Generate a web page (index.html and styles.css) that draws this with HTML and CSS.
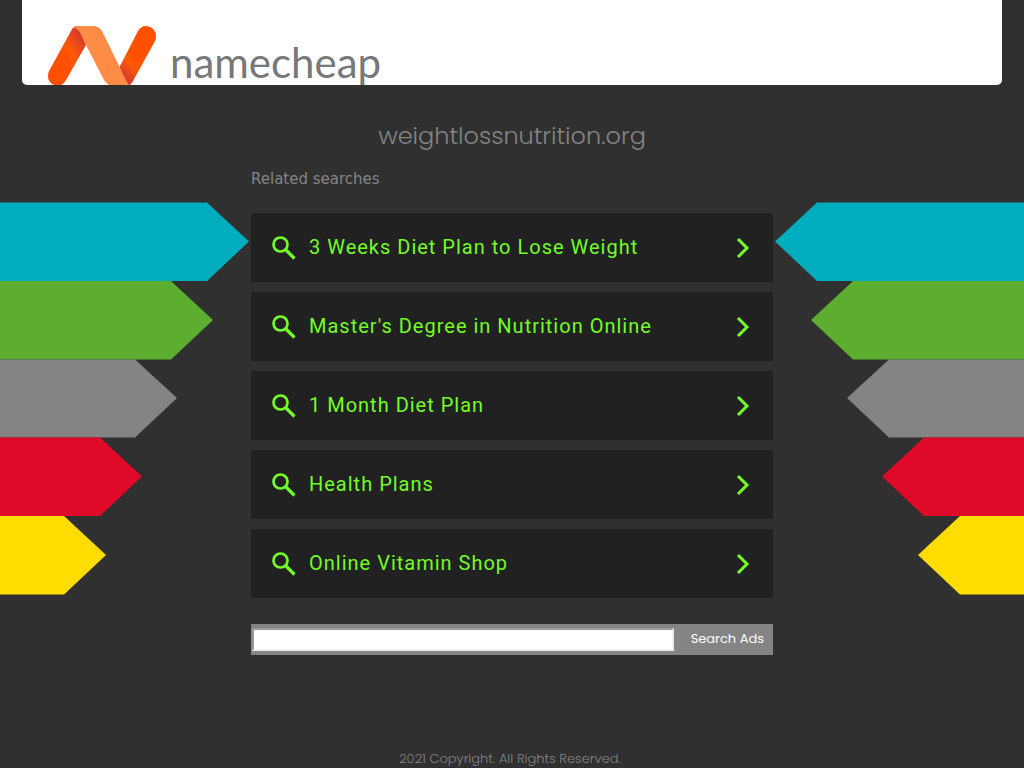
FILE: index.html
```html
<!DOCTYPE html>
<html lang="en">
<head>
<meta charset="utf-8">
<meta name="viewport" content="width=device-width, initial-scale=1">
<title>weightlossnutrition.org</title>
<link rel="stylesheet" href="styles.css">
</head>
<body>
<svg class="defs" aria-hidden="true">
  <symbol id="search" viewBox="0 0 24 24"><circle cx="8.500" cy="8.500" r="7" fill="none" stroke="currentColor" stroke-width="2.700"/><path d="M13.500 13.500L22.500 22.500" fill="none" stroke="currentColor" stroke-width="3.200"/></symbol>
  <symbol id="chevron" viewBox="0 0 14 22"><path d="M2 2L11 11L2 20" fill="none" stroke="currentColor" stroke-width="3"/></symbol>
  <symbol id="arrows" viewBox="0 0 250 393">
    <path fill="#00adbf" d="M0 0.500H207L249 39.500L207 79H0z"/>
    <path fill="#5dad2f" d="M0 79H171L213 118L171 157.500H0z"/>
    <path fill="#848484" d="M0 157.500H135L177 196L135 235.500H0z"/>
    <path fill="#de0a28" d="M0 235.500H100L142 274.500L100 314H0z"/>
    <path fill="#ffdd00" d="M0 314H64L106 353L64 392.500H0z"/>
  </symbol>
</svg>
<header class="header">
  <a class="brand" href="#">
    <svg class="mark" viewBox="0 0 108 60" aria-hidden="true">
      <defs>
        <linearGradient id="left" x1="0.8" y1="0.1" x2="0.45" y2="0.5"><stop offset="0" stop-color="#d53a2c"/><stop offset="0.7" stop-color="#ff5a08"/><stop offset="1" stop-color="#ff5000"/></linearGradient>
        <linearGradient id="right" x1="0.2" y1="0.95" x2="0.45" y2="0.55"><stop offset="0" stop-color="#cf3534"/><stop offset="0.7" stop-color="#ff5a08"/><stop offset="1" stop-color="#ff5000"/></linearGradient>
      </defs>
      <path fill="url(#left)" d="M1 45L23 5Q25 0 30 0L38 19L18 54Q15 60 9 60Q0 58 0 50Q0 47 1 45z"/>
      <path fill="url(#right)" d="M71 42L90 5Q93 0 98 0Q108 1 108 11Q108 13 107 15L85 55Q83 59 80 60L73 48z"/>
      <path fill="#ff8c46" d="M25 2Q28 0 32 0H44Q51 0 54 5L78 54Q80 58 82 60H64Q59 59 56 54L36 15Q31 1 25 2z"/>
    </svg>
    <span class="wordmark">namecheap</span>
  </a>
</header>
<div class="page">
  <svg class="arrows" aria-hidden="true"><use href="#arrows"/></svg>
  <main class="content">
    <h1 class="domain">weightlossnutrition.org</h1>
    <h2 class="label">Related searches</h2>
    <nav class="links">
      <a class="link" href="#"><svg class="search-icon"><use href="#search"/></svg><span class="link-text">3 Weeks Diet Plan to Lose Weight</span><svg class="chevron"><use href="#chevron"/></svg></a>
      <a class="link" href="#"><svg class="search-icon"><use href="#search"/></svg><span class="link-text">Master's Degree in Nutrition Online</span><svg class="chevron"><use href="#chevron"/></svg></a>
      <a class="link" href="#"><svg class="search-icon"><use href="#search"/></svg><span class="link-text">1 Month Diet Plan</span><svg class="chevron"><use href="#chevron"/></svg></a>
      <a class="link" href="#"><svg class="search-icon"><use href="#search"/></svg><span class="link-text">Health Plans</span><svg class="chevron"><use href="#chevron"/></svg></a>
      <a class="link" href="#"><svg class="search-icon"><use href="#search"/></svg><span class="link-text">Online Vitamin Shop</span><svg class="chevron"><use href="#chevron"/></svg></a>
    </nav>
    <form class="search">
      <input class="search-box" type="text" aria-label="Search">
      <button class="search-button" type="button">Search Ads</button>
    </form>
  </main>
  <svg class="arrows arrows-right" aria-hidden="true"><use href="#arrows"/></svg>
</div>
<footer class="footer">2021 Copyright. All Rights Reserved.</footer>
</body>
</html>
```
FILE: styles.css
```css
* { box-sizing: border-box; }
body {
  margin: 0;
  background: #303030;
  color: #848484;
  font-family: Poppins, Inter, sans-serif;
}
.defs { display: none; }
.header {
  margin: 0 22px;
  padding: 26px 26px 0;
  background: #fff;
  border-radius: 0 0 5px 5px;
}
.brand {
  display: flex;
  gap: 14px;
  height: 59px;
  overflow: hidden;
  color: #77787a;
  text-decoration: none;
}
.mark { flex: none; width: 108px; height: 60px; }
.wordmark {
  padding-top: 12px;
  font: 400 42px/48px Lato, sans-serif;
}
.page {
  display: grid;
  grid-template-columns: 1fr minmax(0, 522px) 1fr;
}
.arrows { width: 250px; height: 393px; margin-top: 117px; }
.arrows-right { justify-self: end; transform: scaleX(-1); }
.domain {
  margin: 0;
  padding-top: 33px;
  font-size: 24px;
  font-weight: 300;
  line-height: 36px;
  text-align: center;
}
.label {
  margin: 15px 0 24px;
  font: 400 15px/20px "DejaVu Sans", sans-serif;
}
.links { display: grid; gap: 10px; }
.link {
  display: flex;
  align-items: center;
  padding: 20px 23px 20px 21px;
  background: #212121;
  color: #72fd27;
  font: 400 20px/29px Roboto, sans-serif;
  letter-spacing: 1px;
  text-decoration: none;
}
.search-icon { flex: none; width: 24px; height: 24px; margin-right: 13px; }
.link-text { flex: 1; }
.chevron { flex: none; width: 14px; height: 22px; }
.search {
  display: flex;
  align-items: center;
  margin-top: 26px;
  padding-left: 1px;
  background: #848484;
}
.search-box {
  flex: 1;
  min-width: 0;
  height: 23px;
  padding: 1px 2px;
  border: 2px inset #eee;
  border-radius: 0;
  background: #fff;
}
.search-button {
  width: 99px;
  padding: 0 9px 2px;
  border: 0;
  background: #848484;
  color: #fff;
  font: 400 13px/29px Poppins, Inter, sans-serif;
  text-align: right;
}
.footer {
  margin-top: 94px;
  padding-right: 4px;
  font-size: 13px;
  font-weight: 300;
  line-height: 20px;
  text-align: center;
}
```
